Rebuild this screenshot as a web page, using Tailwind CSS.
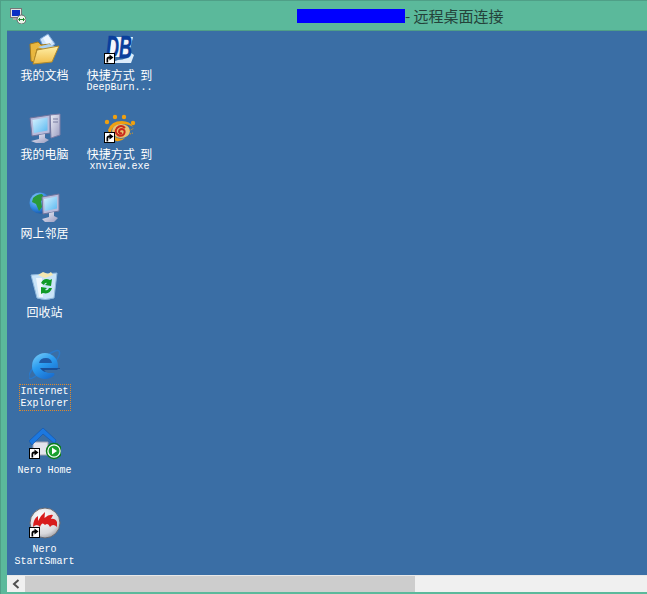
<!DOCTYPE html>
<html lang="zh">
<head>
    <meta charset="UTF-8">
    <meta name="viewport" content="width=device-width, initial-scale=1.0">
    <title>远程桌面连接</title>
    <script src="https://cdn.jsdelivr.net/npm/@tailwindcss/browser@4"></script>
</head>
<body class="bg-[#5bb99b] overflow-hidden">
    <svg width="0" height="0" class="absolute">
        <symbol id="shortcut" viewBox="0 0 11 11">
            <rect x="0.5" y="0.5" width="10" height="10" fill="#fff" stroke="#000"/>
            <path d="M2.500 9.500V6q0-2.500 2.500-2.500h.5V1.500L9.500 4.500l-4 3V5.500H5q-.8 0-.8 1v3z" fill="#000"/>
        </symbol>
        <linearGradient id="screen" x1="0" y1="0" x2="1" y2="1">
            <stop offset="0" stop-color="#d8f2ff"/><stop offset="1" stop-color="#58b8f0"/>
        </linearGradient>
        <linearGradient id="metal" x1="0" y1="0" x2="1" y2="1">
            <stop offset="0" stop-color="#eef0f8"/><stop offset="1" stop-color="#9a9cc0"/>
        </linearGradient>
        <linearGradient id="ie" x1="0" y1="0" x2="0.6" y2="1">
            <stop offset="0" stop-color="#7fd0f8"/><stop offset="0.5" stop-color="#2a9cf0"/><stop offset="1" stop-color="#1a6fd0"/>
        </linearGradient>
        <radialGradient id="globe" cx="0.35" cy="0.3" r="0.8">
            <stop offset="0" stop-color="#8fd0fa"/><stop offset="0.6" stop-color="#2f86e0"/><stop offset="1" stop-color="#144f9c"/>
        </radialGradient>
        <radialGradient id="sphere" cx="0.4" cy="0.3" r="0.8">
            <stop offset="0" stop-color="#ffffff"/><stop offset="0.7" stop-color="#d8d8dc"/><stop offset="1" stop-color="#909096"/>
        </radialGradient>
        <linearGradient id="folder" x1="0" y1="0" x2="0" y2="1">
            <stop offset="0" stop-color="#fff0a8"/><stop offset="1" stop-color="#f0bc48"/>
        </linearGradient>
    </svg>

    <div class="w-[647px] h-[594px] flex flex-col border-t border-l border-[#4f9f87]">
        <!-- title bar -->
        <div class="h-[29px] shrink-0 flex items-center pl-[9px] font-['Noto_Sans_CJK_SC',sans-serif] text-[15px] text-[#24423a]">
            <svg width="16" height="16" viewBox="0 0 16 16" class="shrink-0">
                <rect x="0.500" y="0.500" width="11" height="9" fill="#e4e4e4" stroke="#777"/>
                <rect x="2" y="2" width="8" height="6" fill="#0b2fc4"/>
                <rect x="3" y="10" width="6" height="2" fill="#aaa"/>
                <circle cx="11.500" cy="11.500" r="4.500" fill="#e8f4e8" stroke="#666"/>
                <path d="M9 11.500h5M10 10l-1.500 1.500L10 13M13 10l1.500 1.500L13 13" stroke="#1a8a2a" fill="none"/>
            </svg>
            <span class="ml-[271px] w-[108px] h-[14px] bg-[#0000ff]"></span>
            <span class="whitespace-nowrap leading-[14px]">- 远程桌面连接</span>
        </div>

        <!-- remote desktop -->
        <div class="ml-[6px] flex-1 flex flex-col min-h-0">
            <div class="flex-1 bg-[#3a6ea5] flex text-white text-[12px] leading-[12px] text-center font-['Liberation_Mono',monospace] min-h-0 overflow-hidden border-t border-[#4f9f87]">
                <div class="w-[75px] flex flex-col pt-[2px]">
                    <div class="h-[79px] shrink-0 flex flex-col items-center">
                        <svg width="32" height="32" viewBox="0 0 32 32">
                            <path d="M11 6l8-5 7 10-10 7z" fill="#cfe4fb" stroke="#7ea6d8"/>
                            <path d="M14 5l5-3 4 7-5 3z" fill="#eef6ff"/>
                            <path d="M1 11l8-2 3 3 9-1v5H8l-3 13-3-1z" fill="#e9b73f" stroke="#a57a1c"/>
                            <path d="M9 14l11-3 7 3-7 4z" fill="#a8d0f2"/>
                            <path d="M8 17l22-4-7 16-19 2z" fill="url(#folder)" stroke="#b48a28"/>
                        </svg>
                        <span class="mt-[3px] h-[14px] leading-[14px] font-['Noto_Sans_CJK_SC',sans-serif]">我的文档</span>
                    </div>
                    <div class="h-[79px] shrink-0 flex flex-col items-center">
                        <svg width="32" height="32" viewBox="0 0 32 32">
                            <path d="M21 3l10-1v21l-9 3z" fill="url(#metal)" stroke="#7c7ea8"/>
                            <path d="M24 7h5M24 10h5" stroke="#777aa0"/>
                            <path d="M1 6l20-3v18L3 24z" fill="#b8bcdc" stroke="#70749c"/>
                            <path d="M3.500 8l15-2.500v13L5 21z" fill="url(#screen)"/>
                            <path d="M10 23l6-1v4l4 2-5 3H7l-5-2 8-2z" fill="url(#metal)"/>
                        </svg>
                        <span class="mt-[3px] h-[14px] leading-[14px] font-['Noto_Sans_CJK_SC',sans-serif]">我的电脑</span>
                    </div>
                    <div class="h-[79px] shrink-0 flex flex-col items-center">
                        <svg width="32" height="32" viewBox="0 0 32 32">
                            <circle cx="11" cy="12" r="10.500" fill="url(#globe)"/>
                            <path d="M4 7q4-4 9-4l3 4-4 3 1 6-3 4-3-7-4-2z" fill="#2a9a3a"/>
                            <path d="M13 6l17-3v17l-16 3z" fill="#b8bcdc" stroke="#70749c"/>
                            <path d="M15 8l13-2.500v12L16 20z" fill="url(#screen)"/>
                            <path d="M20 22l5-1v4l4 2-4 4h-9l-3-3 7-2z" fill="url(#metal)"/>
                        </svg>
                        <span class="mt-[3px] h-[14px] leading-[14px] font-['Noto_Sans_CJK_SC',sans-serif]">网上邻居</span>
                    </div>
                    <div class="h-[79px] shrink-0 flex flex-col items-center">
                        <svg width="32" height="32" viewBox="0 0 32 32">
                            <path d="M2 5l26-2-3 25q-9 3-17 0z" fill="#c9e4f8" stroke="#8fb8dc"/>
                            <path d="M9 5l5-3 5 2 3-2 2 3-8 3z" fill="#f4e8b0"/>
                            <path d="M7 8l6 0 1 19-4 0z" fill="#eef6fc"/>
                            <path d="M12 13q3-6 9-3l2-1-1 7-6-1 2-2q-2-1-3 2zM23 18q-2 7-9 5l-2 1 0-7 6 1-2 2q3 1 4-2z" fill="#0f9a26"/>
                        </svg>
                        <span class="mt-[3px] h-[14px] leading-[14px] font-['Noto_Sans_CJK_SC',sans-serif]">回收站</span>
                    </div>
                    <div class="h-[79px] shrink-0 flex flex-col items-center">
                        <svg width="32" height="32" viewBox="0 0 32 32">
                            <path d="M20 5q8-5 10-3 2 3-3 10M8 26q-6 5-8 3-1-3 4-10" fill="none" stroke="#2a78c8" stroke-width="1.500"/>
                            <circle cx="16" cy="17" r="13" fill="url(#ie)"/>
                            <path d="M10 14q1-5 7-5 5 0 6 5z" fill="#1f5aa6"/>
                            <path d="M11 19h20v1H29q-2 3-4 3H17q-3 0-6-4z" fill="#1a4f98"/>
                            <path d="M15 21h15v3q-3 6-7 6 4-3 2-6h-6q-2 0-4-3z" fill="#3a6ea5"/>
                        </svg>
                        <span class="mt-[3px] w-[52px] h-[27px] pt-[1px] border border-dotted border-[#e08a2c] text-[10px]">Internet<br>Explorer</span>
                    </div>
                    <div class="h-[79px] shrink-0 flex flex-col items-center">
                        <span class="relative w-[32px] h-[32px]">
                            <svg width="32" height="32" viewBox="0 0 32 32">
                                <path d="M4 14v13h15V14z" fill="#e4e4ec" stroke="#a0a0b0"/>
                                <path d="M0 13L14 0l13 12-1 4L14 6 3 17z" fill="#1c78e0" stroke="#0d4fa8" stroke-width="0.500"/>
                                <circle cx="25" cy="23" r="7.500" fill="#fff" stroke="#0a7a1a" stroke-width="1.500"/>
                                <circle cx="25" cy="23" r="5.500" fill="#1aa02e"/>
                                <path d="M23 19.500v7l5-3.500z" fill="#fff"/>
                            </svg>
                            <svg width="11" height="11" class="absolute left-0 bottom-[1px]"><use href="#shortcut"/></svg>
                        </span>
                        <span class="mt-[4px] h-[14px] leading-[14px] text-[10px] whitespace-nowrap">Nero Home</span>
                    </div>
                    <div class="h-[79px] shrink-0 flex flex-col items-center">
                        <span class="relative w-[32px] h-[32px]">
                            <svg width="32" height="32" viewBox="0 0 32 32">
                                <circle cx="16" cy="16" r="15" fill="url(#sphere)" stroke="#6a6a70"/>
                                <path d="M4 20q0-8 5-11v5q3-6 7-9l-.5 6q4.500-4 8.500-3l-2 4q4-1 6 3v5q-4-4-7 0-2-5-5-2-3-4-5 2-3-4-7 0z" fill="#d81c1c"/>
                            </svg>
                            <svg width="11" height="11" class="absolute left-0 bottom-[1px]"><use href="#shortcut"/></svg>
                        </span>
                        <span class="mt-[4px] text-[10px] whitespace-nowrap pt-[1px]">Nero<br>StartSmart</span>
                    </div>
                </div>
                <div class="w-[75px] flex flex-col pt-[2px]">
                    <div class="h-[79px] shrink-0 flex flex-col items-center">
                        <span class="relative w-[32px] h-[32px]">
                            <svg width="32" height="32" viewBox="0 0 32 32" class="overflow-visible">
                                <path d="M14 27q10 0 13-7l3 2-3 8H6z" fill="#dcecfa"/>
                                <path d="M8 4h21l-5 20H4z" fill="#f2f6fc"/>
                                <text x="2" y="25" font-family="Liberation Sans" font-size="32" font-weight="700" font-style="italic" fill="#0a3f9c" stroke="#0a3f9c" stroke-width="0.500" textLength="26" lengthAdjust="spacingAndGlyphs">DB</text>
                            </svg>
                            <svg width="11" height="11" class="absolute left-0 bottom-[1px]"><use href="#shortcut"/></svg>
                        </span>
                        <span class="mt-[3px] h-[14px] leading-[14px] font-['Noto_Sans_CJK_SC',sans-serif] whitespace-nowrap [word-spacing:3px]">快捷方式 到</span>
                        <span class="text-[10px]">DeepBurn...</span>
                    </div>
                    <div class="h-[79px] shrink-0 flex flex-col items-center">
                        <span class="relative w-[32px] h-[32px]">
                            <svg width="32" height="32" viewBox="0 0 32 32">
                                <path d="M4 18q3-9 14-9 8 0 11 6-4-3-11-3-9 0-11 8 5 9 14 6-4 4-9 3-6-3-8-11z" fill="#f0a010"/>
                                <ellipse cx="17" cy="19" rx="9" ry="7" fill="#e8c070"/>
                                <path d="M21 16q-4-4-8 0-3 4 1 7 4 2 6-1 2-4-2-5-3 0-3 3 1 2 3 1" fill="none" stroke="#c8281c" stroke-width="2"/>
                                <path d="M25 19l5-3M26 22l3-1" stroke="#f0a010" stroke-dasharray="1 1"/>
                                <circle cx="3" cy="10" r="2.200" fill="#f0a010"/><circle cx="11" cy="5" r="2.200" fill="#f0a010"/><circle cx="20" cy="5" r="2.200" fill="#f0a010"/><circle cx="29" cy="11" r="2.200" fill="#f0a010"/>
                            </svg>
                            <svg width="11" height="11" class="absolute left-0 bottom-[1px]"><use href="#shortcut"/></svg>
                        </span>
                        <span class="mt-[3px] h-[14px] leading-[14px] font-['Noto_Sans_CJK_SC',sans-serif] whitespace-nowrap [word-spacing:3px]">快捷方式 到</span>
                        <span class="text-[10px]">xnview.exe</span>
                    </div>
                </div>
            </div>

            <!-- horizontal scrollbar -->
            <div class="h-[17px] shrink-0 bg-[#f0f0f0] flex border-t border-[#e8e8e8]">
                <div class="w-[18px] flex items-center justify-center">
                    <svg width="8" height="10" viewBox="0 0 8 10"><path d="M6.500 1L2 5l4.500 4" fill="none" stroke="#505050" stroke-width="2"/></svg>
                </div>
                <div class="w-[390px] bg-[#cdcdcd]"></div>
            </div>
        </div>
        <div class="h-[2px] shrink-0"></div>
    </div>
</body>
</html>
